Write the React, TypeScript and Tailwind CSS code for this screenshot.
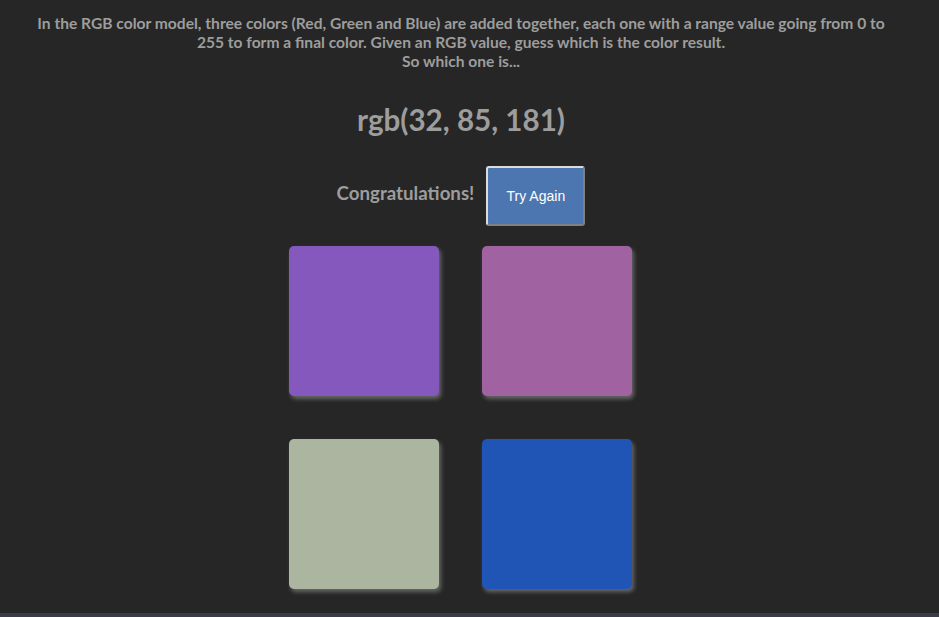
import React from "react";

const colors = ["#8558be", "#a062a0", "#abb5a0", "#2055b5"];

export default function App() {
  return (
    <div className="w-[939px] h-[617px] bg-[#262626] overflow-hidden flex flex-col" style={{ fontFamily: "Lato, 'Open Sans', sans-serif" }}>
      <div className="w-[922px] flex-1 flex flex-col items-center">
        <p className="pt-[14px] text-[15.6px] leading-[19px] font-bold text-[#9d9d9d] text-center px-[31px]">
          In the RGB color model, three colors (Red, Green and Blue) are added together, each one with a range value going from 0 to 255 to form a final color. Given an RGB value, guess which is the color result.
          <br />
          So which one is...
        </p>
        <h1 className="mt-[31px] text-[29.6px] leading-[36px] font-bold text-[#9d9d9d]">rgb(32, 85, 181)</h1>
        <div className="mt-[28px] flex items-center gap-[12px]">
          <span className="text-[18.7px] font-bold text-[#9d9d9d] mt-[-6px]">Congratulations!</span>
          <button className="w-[99px] h-[60px] shrink-0 bg-[#4b76b0] text-white text-[14px] rounded-[3px] border-2 border-t-[#dcdcdc] border-l-[#dcdcdc] border-r-[#808080] border-b-[#808080]" style={{ fontFamily: "'Liberation Sans', Arial, sans-serif" }}>
            Try Again
          </button>
        </div>
        <div className="mt-[20px] grid grid-cols-2 gap-x-[43px] gap-y-[43px] ml-[-1px]">
          {colors.map((c) => (
            <div key={c} className="w-[150px] h-[150px] rounded-[5px] shadow-[2px_3px_4px_rgba(110,110,110,0.9)]" style={{ backgroundColor: c }} />
          ))}
        </div>
      </div>
      <div className="h-[4px] bg-[#3b3c47]" />
    </div>
  );
}
